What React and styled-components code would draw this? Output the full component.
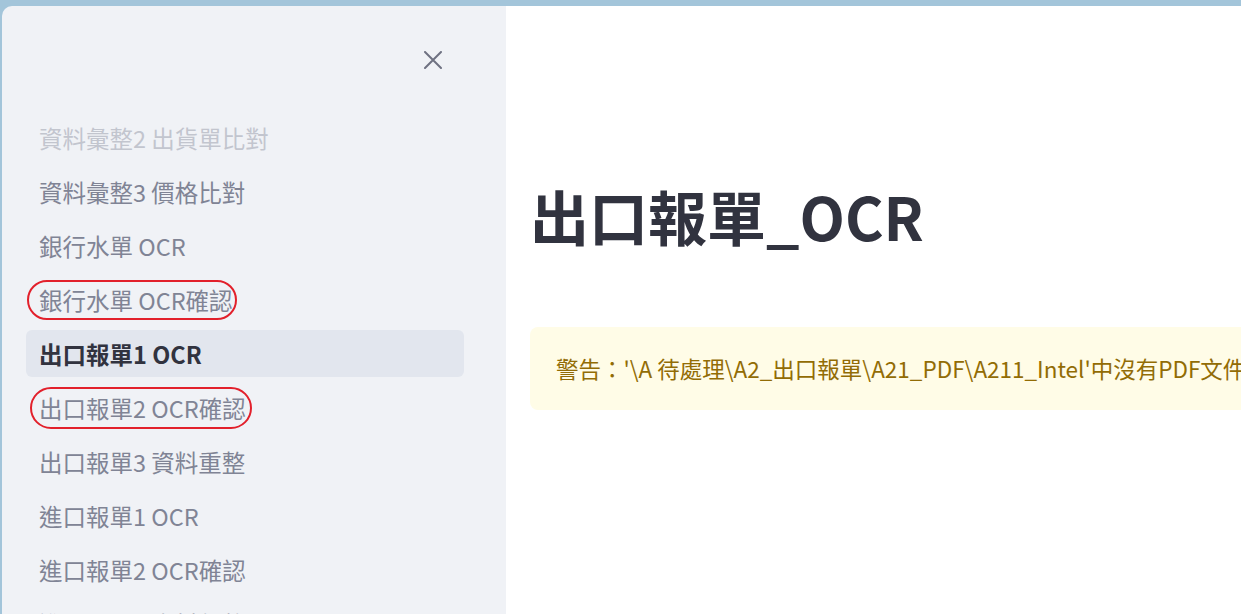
import styled, { createGlobalStyle } from 'styled-components';

const GlobalStyle = createGlobalStyle`
  html, body {
    margin: 0;
    padding: 0;
    overflow: hidden;
    background: #a3c5da;
  }
  * {
    box-sizing: border-box;
  }
`;

const Frame = styled.div`
  display: flex;
  height: 100vh;
  padding: 6px 0 0 2px;
  background: #a3c5da;
  font-family: "Noto Sans CJK TC", "Noto Sans", sans-serif;
`;

const Sidebar = styled.aside`
  width: 504px;
  flex-shrink: 0;
  background-color: #f0f2f6;
  border-top-left-radius: 10px;
  padding: 0 42px 0 24px;
  overflow: hidden;
`;

const Header = styled.div`
  height: 108px;
  display: flex;
  justify-content: flex-end;
  padding: 40px 17px 0 0;
`;

const CloseButton = styled.button`
  width: 28px;
  height: 28px;
  border: none;
  background: transparent;
  padding: 0;
  display: flex;
  align-items: center;
  justify-content: center;
  cursor: pointer;
`;

const Menu = styled.ul`
  list-style: none;
  margin: 0;
  padding: 0;
  display: flex;
  flex-direction: column;
  gap: 7px;
`;

const MenuItem = styled.li`
  height: 47px;
  display: flex;
  align-items: center;
  padding: 0 13px;
  border-radius: 6px;
  font-size: 23.5px;
  white-space: nowrap;
  color: ${(props) => (props.active ? "#31333f" : "#808495")};
  font-weight: ${(props) => (props.active ? 600 : 400)};
  background-color: ${(props) => (props.active ? "#e2e6ee" : "transparent")};
  opacity: ${(props) => (props.faded ? 0.4 : 1)};
  cursor: pointer;
`;

/* red hand-drawn style ring around an item label */
const Circled = styled.span`
  display: inline-flex;
  align-items: center;
  height: ${(props) => props.h}px;
  margin-left: -${(props) => props.left}px;
  padding: 0 ${(props) => props.right}px 0 ${(props) => props.left - 2}px;
  border: 2px solid #e2202b;
  border-radius: 21px;
`;

const Main = styled.main`
  flex: 1;
  background: #fff;
  padding: 175px 0 0 24px;
  overflow: hidden;
`;

const Title = styled.h1`
  margin: 0 0 75px 0;
  font-size: 59px;
  line-height: 1.2;
  font-weight: 700;
  color: #31333f;
  white-space: nowrap;
`;

const Alert = styled.div`
  width: 900px;
  height: 83px;
  display: flex;
  align-items: center;
  padding: 0 26px;
  border-radius: 8px;
  background-color: #fffce7;
  color: #926c05;
  font-size: 22.5px;
  white-space: nowrap;
`;

const items = [
  { label: "資料彙整2 出貨單比對", faded: true },
  { label: "資料彙整3 價格比對" },
  { label: "銀行水單 OCR" },
  { label: "銀行水單 OCR確認", circle: { left: 12, right: 2, h: 40 } },
  { label: "出口報單1 OCR", active: true },
  { label: "出口報單2 OCR確認", circle: { left: 9, right: 4, h: 42 } },
  { label: "出口報單3 資料重整" },
  { label: "進口報單1 OCR" },
  { label: "進口報單2 OCR確認" },
  { label: "進口報單3 資料彙整" },
];

function App() {
  return (
    <>
      <GlobalStyle />
      <Frame>
        <Sidebar>
          <Header>
            <CloseButton aria-label="Close">
              <svg width="18" height="18" viewBox="0 0 18 18">
                <path d="M1 1 L17 17 M17 1 L1 17" stroke="#6f7282" strokeWidth="2" strokeLinecap="round" />
              </svg>
            </CloseButton>
          </Header>
          <Menu>
            {items.map((item) => (
              <MenuItem key={item.label} active={item.active} faded={item.faded}>
                {item.circle ? (
                  <Circled left={item.circle.left} right={item.circle.right} h={item.circle.h}>
                    {item.label}
                  </Circled>
                ) : (
                  item.label
                )}
              </MenuItem>
            ))}
          </Menu>
        </Sidebar>
        <Main>
          <Title>出口報單_OCR</Title>
          <Alert>警告：'\A 待處理\A2_出口報單\A21_PDF\A211_Intel'中沒有PDF文件</Alert>
        </Main>
      </Frame>
    </>
  );
}

export default App;
